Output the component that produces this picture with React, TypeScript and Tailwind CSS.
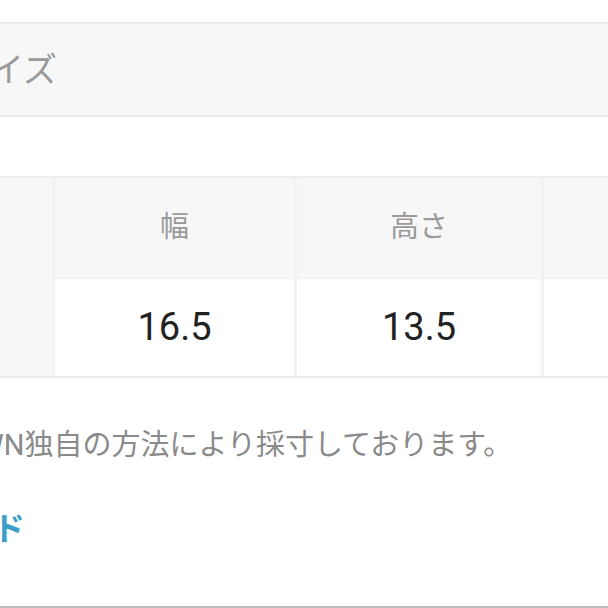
export default function App() {
  const font = "font-['Roboto','Noto_Sans_CJK_JP',sans-serif]";
  return (
    <main className={`w-[608px] h-[608px] overflow-hidden bg-white pt-[22px] ${font}`}>
      {/* section title bar */}
      <div className="h-[95px] bg-[#f7f7f7] border-y-2 border-[#ebebeb] flex items-center overflow-hidden">
        <span className="-ml-[44px] text-[34px] leading-none text-[#9a9a9a] whitespace-nowrap">サイズ</span>
      </div>

      {/* size table */}
      <div className="mt-[59px] border-y-2 border-[#ededed] bg-[#f2f2f2] grid grid-cols-[52px_239px_244px_1fr] gap-x-[3px] gap-y-[1px] overflow-hidden">
        <div className="h-[100px] bg-[#f7f7f7]" />
        <div className="h-[100px] bg-[#f7f7f7] flex items-center justify-center text-[29px] text-[#9a9a9a]">幅</div>
        <div className="h-[100px] bg-[#f7f7f7] flex items-center justify-center text-[29px] text-[#9a9a9a]">高さ</div>
        <div className="h-[100px] bg-[#f7f7f7]" />

        <div className="h-[97px] bg-[#f7f7f7]" />
        <div className="h-[97px] bg-white flex items-center justify-center text-[38px] text-[#222]">16.5</div>
        <div className="h-[97px] bg-white flex items-center justify-center text-[38px] text-[#222]">13.5</div>
        <div className="h-[97px] bg-white" />
      </div>

      {/* note */}
      <p className="mt-[47px] -ml-[132px] h-[40px] leading-[40px] text-[29px] text-[#8a8a8a] whitespace-nowrap">
        ZOZOTOWN独自の方法により採寸しております。
      </p>

      {/* guide link */}
      <p className="mt-[44px] -ml-[166px] h-[40px] leading-[40px] text-[32px] font-bold text-[#3c9fca] whitespace-nowrap">
        サイズガイド
      </p>

      <div className="mt-[57px] h-[2px] bg-[#bdbdbd]" />
    </main>
  );
}
